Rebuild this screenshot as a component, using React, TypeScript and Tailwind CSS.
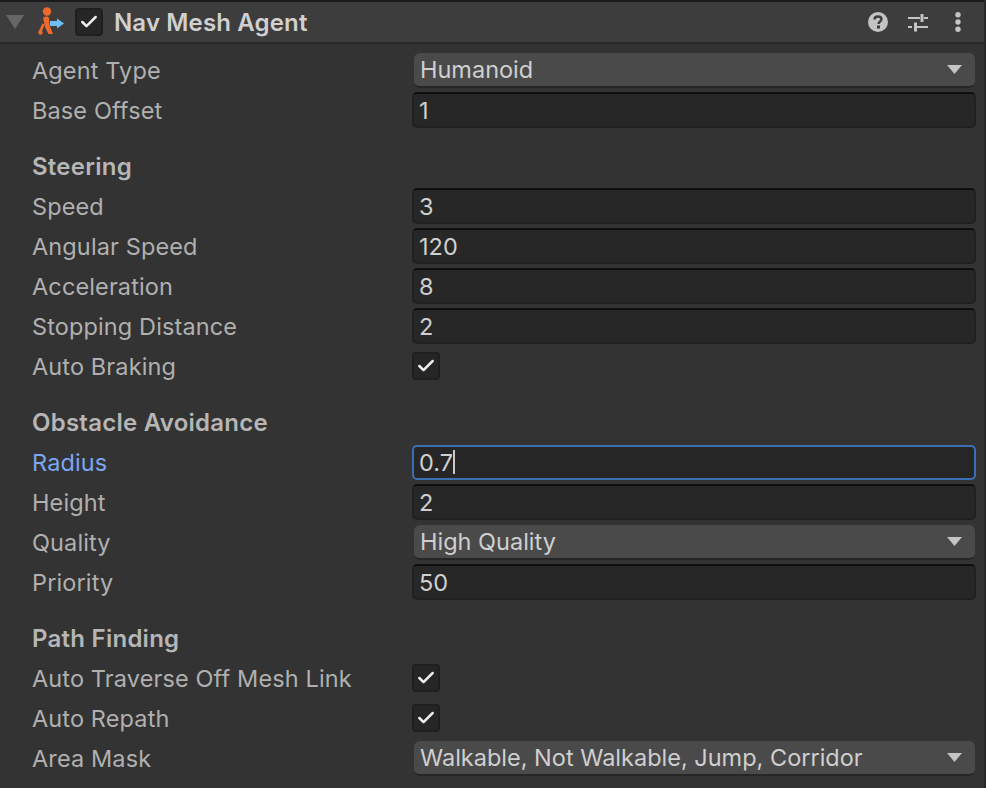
import { Check } from "lucide-react"

type Row =
  | { kind: "text"; label: string; value: string; focused?: boolean }
  | { kind: "select"; label: string; value: string }
  | { kind: "check"; label: string }

const sections: { title?: string; rows: Row[] }[] = [
  {
    rows: [
      { kind: "select", label: "Agent Type", value: "Humanoid" },
      { kind: "text", label: "Base Offset", value: "1" },
    ],
  },
  {
    title: "Steering",
    rows: [
      { kind: "text", label: "Speed", value: "3" },
      { kind: "text", label: "Angular Speed", value: "120" },
      { kind: "text", label: "Acceleration", value: "8" },
      { kind: "text", label: "Stopping Distance", value: "2" },
      { kind: "check", label: "Auto Braking" },
    ],
  },
  {
    title: "Obstacle Avoidance",
    rows: [
      { kind: "text", label: "Radius", value: "0.7", focused: true },
      { kind: "text", label: "Height", value: "2" },
      { kind: "select", label: "Quality", value: "High Quality" },
      { kind: "text", label: "Priority", value: "50" },
    ],
  },
  {
    title: "Path Finding",
    rows: [
      { kind: "check", label: "Auto Traverse Off Mesh Link" },
      { kind: "check", label: "Auto Repath" },
      { kind: "select", label: "Area Mask", value: "Walkable, Not Walkable, Jump, Corridor" },
    ],
  },
]

function CheckBox() {
  return (
    <div className="flex h-[28px] w-[28px] items-center justify-center rounded-[4px] border-2 border-[#1f1f1f] bg-[#262626]">
      <Check size={20} strokeWidth={3} className="text-[#eeeeee]" />
    </div>
  )
}

function Field({ row }: { row: Row }) {
  if (row.kind === "check") return <CheckBox />
  if (row.kind === "select") {
    return (
      <div className="ml-[2px] flex h-[35px] w-[561px] items-center justify-between rounded-[6px] border-b-2 border-[#262626] bg-[#4a4a4a] pl-[6px] pr-[13px] text-[#cfcfcf]">
        <span className="pt-[2px]">{row.value}</span>
        <svg width="15" height="9" viewBox="0 0 15 9">
          <path d="M0 0H15L7.5 9Z" fill="#c4c4c4" />
        </svg>
      </div>
    )
  }
  if (row.focused) {
    return (
      <div className="flex h-[35px] w-[564px] items-center rounded-[5px] border-2 border-[#3a6fb5] bg-[#262626] pl-[5px] text-[#cfcfcf]">
        <span className="pt-[2px]">{row.value}</span>
        <span className="h-[24px] w-[2px] bg-[#c8c8c8]" />
      </div>
    )
  }
  return (
    <div className="flex h-[36px] w-[564px] items-center rounded-[5px] border-2 border-[#212121] border-t-[#0f0f0f] bg-[#272727] pl-[5px] pt-[2px] text-[#cfcfcf]">
      {row.value}
    </div>
  )
}

export default function App() {
  return (
    <div className="h-[788px] w-[986px] overflow-hidden border-r-2 border-[#282828] bg-[#333333] font-['Inter',sans-serif] text-[23.5px]">
      {/* Header */}
      <div className="h-[2px] bg-[#1a1a1a]" />
      <div className="flex h-[42px] items-center border-b-2 border-[#2a2a2a] bg-[#3d3d3d] pl-[6px] pr-[6px]">
        <svg width="18" height="14" viewBox="0 0 18 14" className="mr-[14px]">
          <path d="M0 0H18L9 14Z" fill="#666666" />
        </svg>
        <svg width="28" height="30" viewBox="0 0 28 30" className="mr-[10px] -translate-x-[1px]">
          <circle cx="10" cy="4.500" r="4.200" fill="#ee6a2c" />
          <path d="M6.500 10.500C8 9.200 11.500 9.200 12 11L12.500 18L16 27H11.500L8 20L6 10.500Z" fill="#ee6a2c" />
          <circle cx="3.500" cy="25.500" r="2.200" fill="#ee6a2c" />
          <path d="M3 25L6.500 17" stroke="#ee6a2c" strokeWidth="2.800" />
          <path d="M13 14H20V11.500L27 16.500L20 21.500V19H13Z" fill="#6cc0f5" />
        </svg>
        <div className="-translate-x-[1px]">
          <CheckBox />
        </div>
        <span className="ml-[10px] pt-[2px] text-[24px] font-semibold tracking-[0.15px] text-[#d0d0d0]">Nav Mesh Agent</span>
        <div className="ml-auto flex w-[110px] items-center">
          <svg width="20" height="20" viewBox="0 0 20 20" className="mr-[20px]">
            <circle cx="10" cy="10" r="10" fill="#c4c4c4" />
            <path d="M6.500 7.500C6.500 5.500 8 4.500 10 4.500C12 4.500 13.500 5.700 13.500 7.300C13.500 9.500 10.500 9.600 10.500 12" fill="none" stroke="#3d3d3d" strokeWidth="2.400" />
            <rect x="9" y="13.500" width="3" height="3" fill="#3d3d3d" />
          </svg>
          <svg width="20" height="20" viewBox="0 0 20 20" className="mr-[26px]">
            <path d="M0 6H12M16 6H20M0 15H4M9 15H20" stroke="#c4c4c4" strokeWidth="2" fill="none" />
            <rect x="12.500" y="2" width="3" height="8" fill="#c4c4c4" />
            <rect x="6" y="10.500" width="3" height="9" fill="#c4c4c4" />
          </svg>
          <svg width="8" height="20" viewBox="0 0 8 20">
            <circle cx="4" cy="2.700" r="2.700" fill="#c4c4c4" />
            <circle cx="4" cy="10" r="2.700" fill="#c4c4c4" />
            <circle cx="4" cy="17.300" r="2.700" fill="#c4c4c4" />
          </svg>
        </div>
      </div>

      {/* Properties */}
      <div className="flex flex-col gap-[16px] pt-[6px]">
        {sections.map((section, i) => (
          <div key={i}>
            {section.title && (
              <div className="flex h-[40px] items-center pl-[32px] pt-[2px] text-[24px] font-semibold tracking-[0.25px] text-[#b6b6b6]">
                {section.title}
              </div>
            )}
            {section.rows.map((row) => (
              <div key={row.label} className="flex h-[40px] items-center">
                <div
                  className={
                    "w-[412px] shrink-0 pl-[32px] pt-[2px] tracking-[0.12px] " +
                    (row.kind === "text" && row.focused ? "text-[#7ba6f2]" : "text-[#b0b0b0]")
                  }
                >
                  {row.label}
                </div>
                <Field row={row} />
              </div>
            ))}
          </div>
        ))}
      </div>
    </div>
  )
}
